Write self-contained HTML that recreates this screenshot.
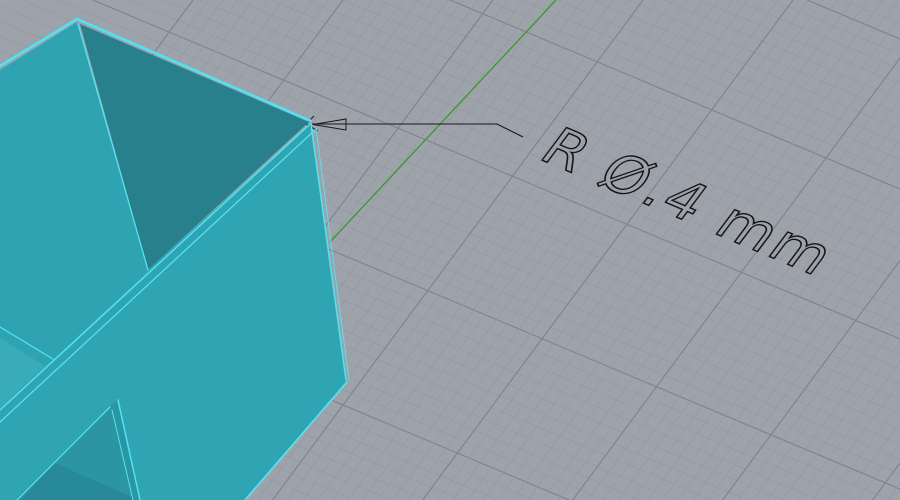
<!DOCTYPE html>
<html><head><meta charset="utf-8"><style>
html,body{margin:0;padding:0;width:900px;height:500px;overflow:hidden;background:#9ea3ab}
svg{display:block;overflow:hidden}
</style></head><body>
<svg id="s" width="900" height="500" viewBox="0 0 900 500" xmlns="http://www.w3.org/2000/svg">
<rect width="900" height="500" fill="#9ea3ab"/>
<g id="grid"></g>
<line x1="330" y1="242" x2="556" y2="0" stroke="#3a9a2a" stroke-width="1.3"/>
<polyline points="312,124 497,124 523,137" fill="none" stroke="#1a1a1a" stroke-width="1.1"/>
<polygon points="313,124.5 346,119 346,130" fill="none" stroke="#1a1a1a" stroke-width="1"/>
<polyline points="314,116 306,124 318,131" fill="none" stroke="#1a1a1a" stroke-width="1"/>
<text transform="matrix(0.92,0.39,-0.6,0.8,537,158)" font-family="'DejaVu Sans','Liberation Sans',sans-serif" font-size="56" letter-spacing="3" fill="none" stroke="#151515" stroke-width="1.5">R Ø.4 mm</text>
<polygon points="0,70 77,22 148,270 0,412" fill="#2fa3b2"/>
<polygon points="80,24 309,122 148,270" fill="#27808b"/>
<polygon points="310,124 347,382 245,500 0,500 0,412 148,270" fill="#2fa4b3"/>
<polygon points="0,338 45,366 0,408" fill="#3aabb8"/>
<polygon points="117,400 140,500 15,500 110,406" fill="#2b95a2"/>
<polygon points="55,463 132,497 132,500 20,500" fill="#27899a"/>
<g fill="none" stroke="#4fe4f4" stroke-linecap="round">
<polyline points="0,66 77,19 311,121" stroke-width="2.5"/>
<line x1="78" y1="24" x2="148" y2="270" stroke-width="1.3"/>
<line x1="309" y1="125" x2="0" y2="410" stroke-width="1.5"/>
<line x1="315" y1="130" x2="0" y2="422" stroke-width="1.3"/>
<line x1="311" y1="124" x2="346" y2="380" stroke-width="1.5"/>
<line x1="316" y1="128" x2="349" y2="380" stroke-width="1"/>
<line x1="347" y1="382" x2="245" y2="500" stroke-width="1.8"/>
<line x1="0" y1="327" x2="53" y2="359" stroke-width="1.3"/>
<line x1="110" y1="407" x2="17" y2="500" stroke-width="1.3"/>
<line x1="118" y1="400" x2="140" y2="500" stroke-width="1.5"/>
<line x1="112" y1="410" x2="133" y2="500" stroke-width="1"/>
</g>
</svg>
<script>
var g=document.getElementById('grid'),h='';
for(var k=-40;k<=40;k++){var y0=-39+k*15;var maj=(k%10===0);
h+='<line x1="0" y1="'+y0+'" x2="900" y2="'+(y0+0.42*900)+'" stroke="'+(maj?'#80848c':'#94999f')+'" stroke-width="'+(maj?1.2:0.7)+'"/>';}
for(var k=-40;k<=40;k++){var x0=793+k*15;var maj=(k%10===0);
h+='<line x1="'+x0+'" y1="0" x2="'+(x0-500/1.35)+'" y2="500" stroke="'+(maj?'#80848c':'#94999f')+'" stroke-width="'+(maj?1.2:0.7)+'"/>';}
g.innerHTML=h;
</script>
</body></html>
